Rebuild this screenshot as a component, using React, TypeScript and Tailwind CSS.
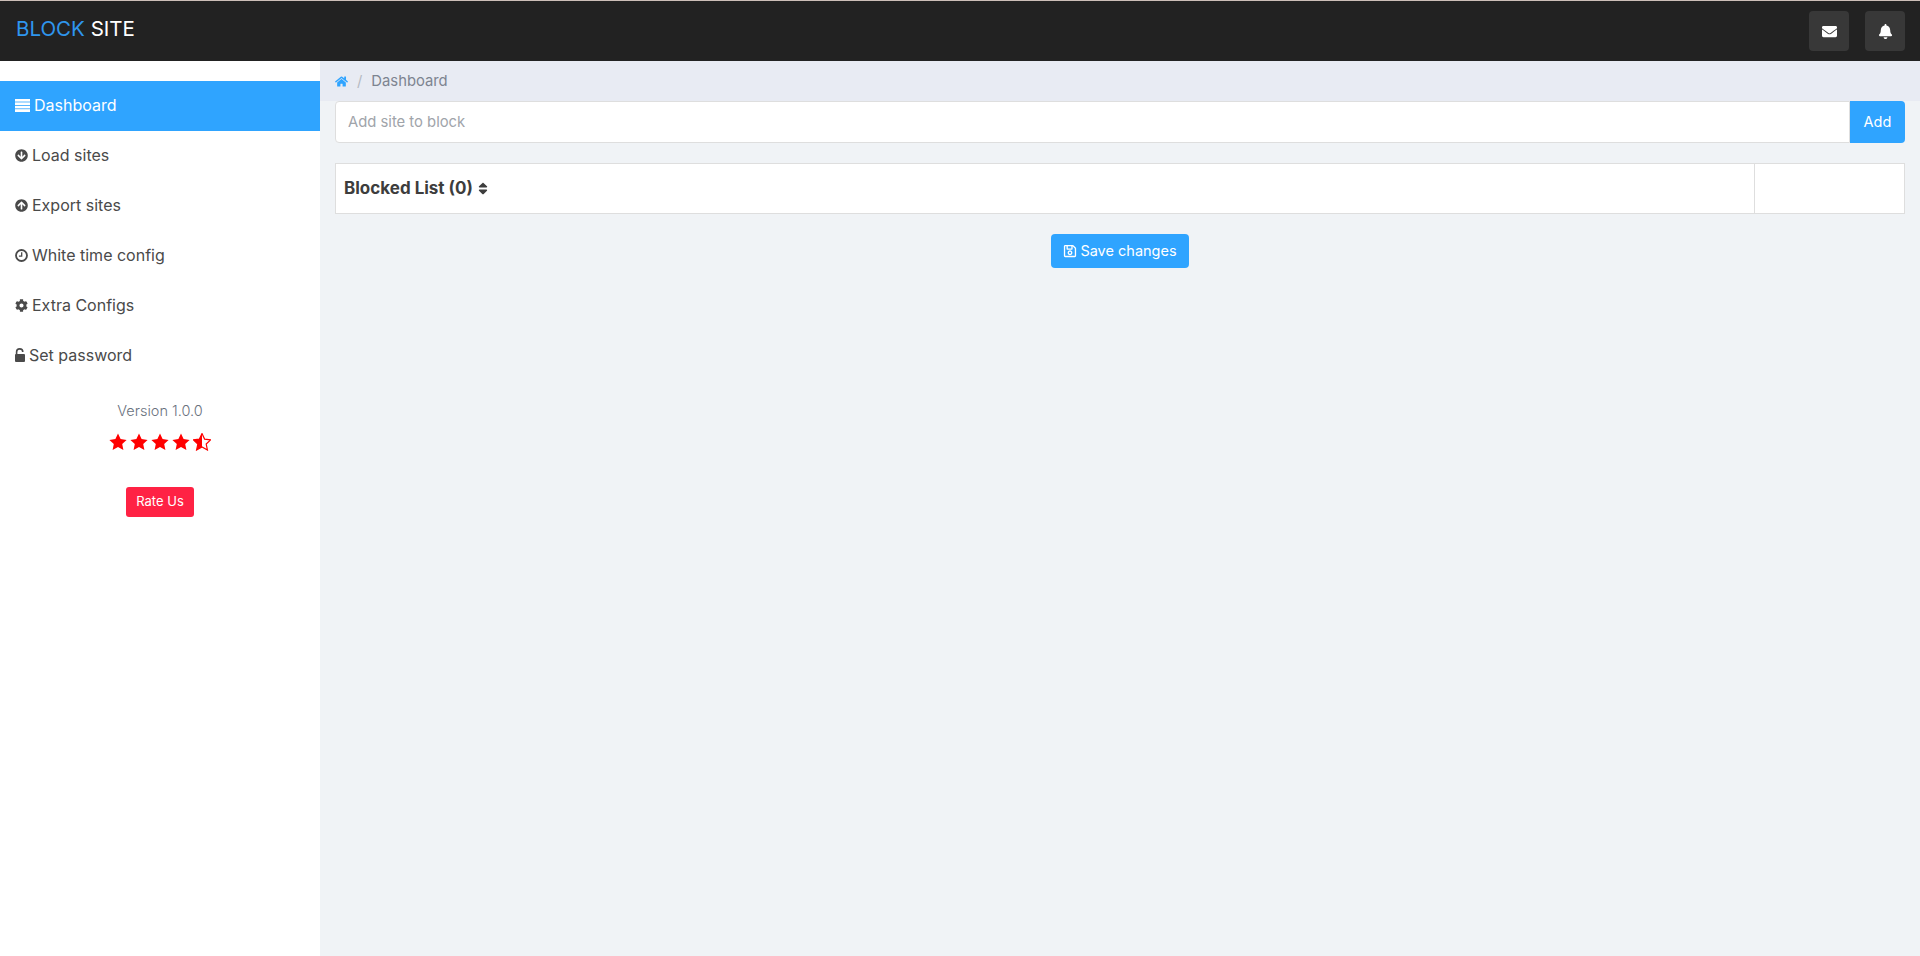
import {
  FaArrowCircleDown,
  FaArrowCircleUp,
  FaBell,
  FaCog,
  FaEnvelope,
  FaHome,
  FaRegSave,
  FaSort,
} from "react-icons/fa";

type IconProps = { className?: string };

function TableIcon({ className }: IconProps) {
  return (
    <svg viewBox="0 0 15 13" fill="currentColor" className={className}>
      <rect x="0" y="0" width="15" height="2.6" />
      <rect x="0" y="3.4" width="15" height="2.6" />
      <rect x="0" y="6.8" width="15" height="2.6" />
      <rect x="0" y="10.2" width="15" height="2.8" />
    </svg>
  );
}

function ClockIcon({ className }: IconProps) {
  return (
    <svg viewBox="0 0 14 14" fill="none" stroke="currentColor" className={className}>
      <circle cx="7" cy="7" r="5.9" strokeWidth="2" />
      <path d="M7.2 3.5V7.6H4.2" strokeWidth="1.4" />
    </svg>
  );
}

function UnlockIcon({ className }: IconProps) {
  return (
    <svg viewBox="0 0 10 14" className={className}>
      <rect x="0" y="6" width="10" height="8" rx="1" fill="currentColor" />
      <path d="M1.6 6.5V4a3.1 3.1 0 0 1 6.2 0" fill="none" stroke="currentColor" strokeWidth="1.6" />
    </svg>
  );
}

const starPoints = "9,0.6 11.6,6.1 17.6,6.9 13.2,11 14.4,17 9,14 3.6,17 4.8,11 0.4,6.9 6.4,6.1";

function Star({ half }: { half?: boolean }) {
  return (
    <svg viewBox="0 0 18 18" className="h-[18px] w-[18px]">
      {half ? (
        <>
          <polygon points={starPoints} fill="none" stroke="currentColor" strokeWidth="1.2" />
          <polygon points="9,0.6 9,14 3.6,17 4.8,11 0.4,6.9 6.4,6.1" fill="currentColor" />
        </>
      ) : (
        <polygon points={starPoints} fill="currentColor" />
      )}
    </svg>
  );
}

const navItems = [
  { label: "Dashboard", icon: TableIcon, iconClass: "h-[13px] w-[15px]", active: true },
  { label: "Load sites", icon: FaArrowCircleDown, iconClass: "h-[13px] w-[13px]" },
  { label: "Export sites", icon: FaArrowCircleUp, iconClass: "h-[13px] w-[13px]" },
  { label: "White time config", icon: ClockIcon, iconClass: "h-[13px] w-[13px]" },
  { label: "Extra Configs", icon: FaCog, iconClass: "h-[13px] w-[13px]" },
  { label: "Set password", icon: UnlockIcon, iconClass: "h-[14px] w-[10px]" },
];

function Sidebar() {
  return (
    <aside className="w-[320px] shrink-0 bg-white pt-5">
      <nav className="flex flex-col">
        {navItems.map((item) => {
          const Icon = item.icon;
          return (
            <a
              key={item.label}
              href="#"
              className={`flex h-[50px] items-center gap-1 pb-[2px] pl-[15px] text-base ${
                item.active ? "bg-[#2fa4ff] text-white" : "text-[#4a4a4a]"
              }`}
            >
              <Icon className={`shrink-0 ${item.iconClass}`} />
              {item.label}
            </a>
          );
        })}
      </nav>
      <div className="mt-5 flex flex-col items-center">
        <p className="text-[14.5px] leading-5 font-light text-[#6a727e]">Version 1.0.0</p>
        <div className="mt-3 flex gap-[3px] text-[#ff0000]">
          <Star />
          <Star />
          <Star />
          <Star />
          <Star half />
        </div>
        <button
          type="button"
          className="mt-[36px] h-[30px] w-[68px] rounded-[3px] bg-[#ff2244] text-[13px] text-white"
        >
          Rate Us
        </button>
      </div>
    </aside>
  );
}

export default function App() {
  return (
    <div className="flex min-h-[956px] flex-col bg-[#f0f3f6] font-['Inter','Liberation_Sans',sans-serif]">
      <header className="flex h-[61px] shrink-0 items-center justify-between border-t border-[#cdbfb8] bg-[#222222] px-[15px]">
        <div className="mb-[3px] pl-px text-[20.5px] leading-none">
          <span className="text-[#2f96ee]">BLOCK</span> <span className="text-white">SITE</span>
        </div>
        <div className="flex gap-4">
          <button
            type="button"
            className="flex h-10 w-10 items-center justify-center rounded-[4px] bg-[#383838] text-white"
          >
            <FaEnvelope className="h-[15px] w-[15px]" />
          </button>
          <button
            type="button"
            className="flex h-10 w-10 items-center justify-center rounded-[4px] bg-[#383838] text-white"
          >
            <FaBell className="h-[15px] w-[15px]" />
          </button>
        </div>
      </header>

      <div className="flex flex-1">
        <Sidebar />
        <main className="min-w-0 flex-1">
          <div className="flex h-10 items-center bg-[#e8ebf3] px-[15px] text-[14.8px] text-[#7d8490]">
            <FaHome className="h-[13px] w-[13px] text-[#2fa4ff]" />
            <span className="mx-[9px] text-[#b5bac2]">/</span>
            <span>Dashboard</span>
          </div>

          <div className="px-[15px]">
            <div className="flex h-[42px]">
              <input
                placeholder="Add site to block"
                className="min-w-0 flex-1 rounded-l-[4px] border border-[#dedede] bg-white px-3 text-[14.8px] outline-none placeholder:text-[#a0a4aa]"
              />
              <button
                type="button"
                className="w-[55px] rounded-r-[4px] bg-[#2fa4ff] text-[14.5px] text-white"
              >
                Add
              </button>
            </div>

            <table className="mt-5 h-[51px] w-full border-collapse bg-white">
              <tbody>
                <tr>
                  <th className="border border-[#dedede] px-2 text-left text-[17px] font-bold text-[#3d3d3d]">
                    <span className="inline-flex items-center gap-[5px]">
                      Blocked List (0)
                      <FaSort className="h-[15px] w-[10px]" />
                    </span>
                  </th>
                  <td className="w-[150px] border border-[#dedede]" />
                </tr>
              </tbody>
            </table>

            <div className="mt-5 flex justify-center">
              <button
                type="button"
                className="flex h-[34px] w-[138px] items-center justify-center gap-[3px] rounded-[4px] bg-[#2fa4ff] text-[14.5px] text-white"
              >
                <FaRegSave className="h-[14px] w-[14px]" />
                Save changes
              </button>
            </div>
          </div>
        </main>
      </div>
    </div>
  );
}
